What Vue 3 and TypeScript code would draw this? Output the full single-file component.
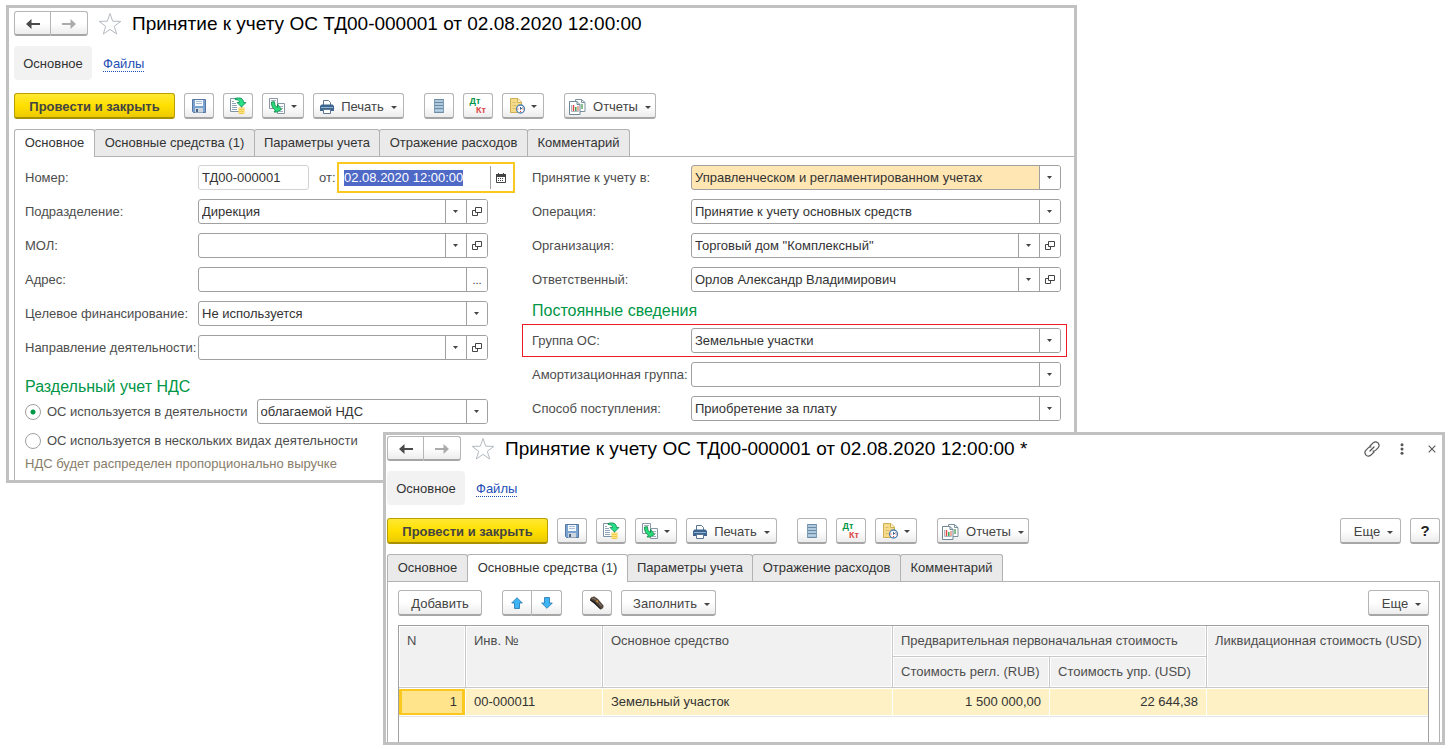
<script setup lang="ts">
import { onMounted, ref } from 'vue'

type Field = {
  id: string
  label: string
  value: string
  kind: 'select' | 'combo' | 'dots'
  filled?: boolean
}

type Pane = {
  id: string
  title: string
  active: number
  front: boolean
}

const panes: Pane[] = [
  { id: 'main', title: 'Принятие к учету ОС ТД00-000001 от 02.08.2020 12:00:00', active: 0, front: false },
  { id: 'assets', title: 'Принятие к учету ОС ТД00-000001 от 02.08.2020 12:00:00 *', active: 1, front: true },
]

const tabs = ['Основное', 'Основные средства (1)', 'Параметры учета', 'Отражение расходов', 'Комментарий']

const leftFields: Field[] = [
  { id: 'department', label: 'Подразделение:', value: 'Дирекция', kind: 'combo' },
  { id: 'mol', label: 'МОЛ:', value: '', kind: 'combo' },
  { id: 'address', label: 'Адрес:', value: '', kind: 'dots' },
  { id: 'funding', label: 'Целевое финансирование:', value: 'Не используется', kind: 'select' },
  { id: 'direction', label: 'Направление деятельности:', value: '', kind: 'combo' },
]

const rightFields: Field[] = [
  { id: 'accounting', label: 'Принятие к учету в:', value: 'Управленческом и регламентированном учетах', kind: 'select', filled: true },
  { id: 'operation', label: 'Операция:', value: 'Принятие к учету основных средств', kind: 'select' },
  { id: 'company', label: 'Организация:', value: 'Торговый дом "Комплексный"', kind: 'combo' },
  { id: 'responsible', label: 'Ответственный:', value: 'Орлов Александр Владимирович', kind: 'combo' },
]

const constantFields: Field[] = [
  { id: 'group', label: 'Группа ОС:', value: 'Земельные участки', kind: 'select' },
  { id: 'depreciation', label: 'Амортизационная группа:', value: '', kind: 'select' },
  { id: 'receipt', label: 'Способ поступления:', value: 'Приобретение за плату', kind: 'select' },
]

const columns = [
  { title: 'Основные', fields: leftFields },
  { title: 'Учет', fields: rightFields },
]

const number = ref('ТД00-000001')
const date = ref('02.08.2020 12:00:00')
const usage = ref('single')
const dateInput = ref<HTMLInputElement[] | null>(null)

onMounted(() => {
  const input = dateInput.value?.[0]
  input?.focus()
  input?.select()
})
</script>

<template>
  <main class="desktop">
    <section v-for="pane in panes" :key="pane.id" class="window" :class="pane.front ? 'front' : 'back'">
      <header class="title-row">
        <div class="split">
          <button type="button" aria-label="Назад">
            <svg width="16" height="12" viewBox="0 0 16 12"><path d="M1 6 6.500 1v4H15v2H6.500v4z" fill="#4a4a4a" /></svg>
          </button>
          <button type="button" aria-label="Вперед">
            <svg width="16" height="12" viewBox="0 0 16 12"><path d="M15 6 9.500 1v4H1v2h8.500v4z" fill="#ababab" /></svg>
          </button>
        </div>
        <button type="button" class="bare star" aria-label="Избранное">
          <svg width="24" height="24" viewBox="0 0 24 24"><path d="M12 1.500 14.700 9.200 22.800 9.400 16.300 14.300 18.700 22 12 17.400 5.300 22 7.700 14.300 1.200 9.400 9.300 9.200z" fill="#fff" stroke="#b4bac1" /></svg>
        </button>
        <h1>{{ pane.title }}</h1>
        <div v-if="pane.front" class="window-tools">
          <button type="button" class="bare" aria-label="Ссылка">
            <svg width="16" height="16" viewBox="0 0 16 16" fill="none" stroke="#555" stroke-width="1.200" stroke-linecap="round"><path d="M6 5 9.300 1.700Q11.500-.2 14 1.900 16.100 4.500 14.200 6.700L11.500 9.400Q10.500 10.300 9 10M10 11 6.700 14.300Q4.500 16.200 2 14.100-.1 11.500 1.800 9.300L4.500 6.600Q5.500 5.700 7 6M6 10 10 6" /></svg>
          </button>
          <button type="button" class="bare" aria-label="Меню">
            <svg width="4" height="12" viewBox="0 0 4 12" fill="#555"><circle cx="2" cy="1.700" r="1.500" /><circle cx="2" cy="6" r="1.500" /><circle cx="2" cy="10.300" r="1.500" /></svg>
          </button>
          <button type="button" class="bare close" aria-label="Закрыть">
            <svg width="8" height="8" viewBox="0 0 8 8" stroke="#555" stroke-width="1.100"><path d="M.7.7l6.600 6.600M7.300.7.7 7.300" /></svg>
          </button>
        </div>
      </header>

      <nav class="sections">
        <a href="#" class="current">Основное</a>
        <a href="#" class="link">Файлы</a>
      </nav>

      <div class="toolbar">
        <button type="button" class="btn primary">Провести и закрыть</button>
        <button type="button" class="btn icon" aria-label="Записать">
          <svg width="14" height="14" viewBox="0 0 14 14"><path d="M.5.5h13v13h-12l-1-1z" fill="#7ba3d2" stroke="#56779f" /><path d="M3 1h8v6H3z" fill="#f6f9fc" /><path d="M4 2.500h6M4 4.500h6" stroke="#a9bdd4" /><path d="M3 9h8v4.500H3z" fill="#cdd5dd" /><path d="M4 10h2v3H4z" fill="#466588" /></svg>
        </button>
        <button type="button" class="btn icon" aria-label="Провести">
          <svg width="18" height="18" viewBox="0 0 18 18"><path d="M1.500 1.500h11v13h-11z" fill="#fff" stroke="#7d92a5" /><path d="M3 4.500h2M3 6.500h4M3 8.500h5M3 10.500h5M3 12.500h5" stroke="#91a4b5" /><path d="M9.500 10.500h6v6q-3 1.500-6 0z" fill="#f3c944" /><path d="M9.500 11q3 1.500 6 0M9.500 13q3 1.500 6 0M9.500 15q3 1.500 6 0" fill="none" stroke="#fff0a6" stroke-width=".8" /><path d="M6 1.500c5-1.500 8.500 0 8.500 4H17l-4.500 4.500L8 5.500h2.500C10.500 3.500 9 2.500 6 2.500z" fill="#27e086" stroke="#15935a" stroke-width=".9" /></svg>
        </button>
        <button type="button" class="btn icon menu" aria-label="Создать на основании">
          <svg width="18" height="18" viewBox="0 0 18 18"><path d="M1.500 1.500h8v10h-8z" fill="#fff" stroke="#8797a6" /><path d="M3 3.500h5M3 5.500h3M3 7.500h3" stroke="#a1b0be" /><path d="M9.500 6.500h7v10h-7z" fill="#fff" stroke="#8797a6" /><path d="M12 9.500h3M13 11.500h2M11 14.500h4" stroke="#a1b0be" /><path d="M3.500 5 6.500 4.700 7 8.500 9.500 10.500V7l4 5.500-4.500 2.500H6L7.500 13Q3.300 11 3.500 5z" fill="#27dd7b" stroke="#15894d" stroke-width=".9" /></svg>
          <svg class="caret" width="6" height="3" viewBox="0 0 6 3"><path d="M0 0h6L3 3z" /></svg>
        </button>
        <button type="button" class="btn menu print">
          <svg width="14" height="14" viewBox="0 0 14 14"><path d="M3.500 5V.5H8.500L10.500 2.500V5" fill="#fff" stroke="#5c7590" /><path d="M1.500 4.500h11l1.500 1.500v5H0V6z" fill="#3d668f" /><path d="M1 7.500h12" stroke="#8fb2d4" /><path d="M3.500 9.500h7v4h-7z" fill="#fff" stroke="#5c7590" /></svg>
          <span>Печать</span>
          <svg class="caret" width="6" height="3" viewBox="0 0 6 3"><path d="M0 0h6L3 3z" /></svg>
        </button>
        <button type="button" class="btn icon group" aria-label="Список">
          <svg width="10" height="14" viewBox="0 0 10 14"><path d="M0 0h10v14H0z" fill="#a5c1d8" /><path d="M0 .5h10M0 3.500h10M0 6.500h10M0 9.500h10M0 13.500h10" stroke="#6c8ba5" /><path d="M1 2h8M1 5h8M1 8h8M1 11.500h8" stroke="#b8d0e3" /><path d="M.5 0v14M9.500 0v14" stroke="#7e9bb3" /></svg>
        </button>
        <button type="button" class="btn icon dtkt" aria-label="Дебет и кредит"><span>Дт</span><span>Кт</span></button>
        <button type="button" class="btn icon menu" aria-label="Календарь">
          <svg width="18" height="18" viewBox="0 0 18 18"><path d="M2.500 1.500H10L13.500 5v10.500h-11z" fill="#f5db8a" stroke="#cfae55" /><path d="M9.500 1.500V5.500h4" fill="#fff4c8" stroke="#cfae55" /><path d="M4.500 5.500h3M4.500 8.500h4M4.500 11.500h3" stroke="#d9bd6c" /><circle cx="12.500" cy="12" r="4" fill="#fff" stroke="#4d7eb0" stroke-width="1.300" /><path d="M12.500 12.500V10M12.500 12.500l2-2" stroke="#3d6591" /><path d="M9.500 12h1M14.500 12h1M12.500 14v1" stroke="#e33" /></svg>
          <svg class="caret" width="6" height="3" viewBox="0 0 6 3"><path d="M0 0h6L3 3z" /></svg>
        </button>
        <button type="button" class="btn menu group reports">
          <svg width="17" height="16" viewBox="0 0 17 16"><path d="M6.500.5h6l3.500 3v9H6.500z" fill="#fff" stroke="#7c919f" /><path d="M12.500.5v3H16" fill="none" stroke="#7c919f" /><path d="M13 5v5" stroke="#61aa66" stroke-width="1.500" /><path d="M.5 2.500H8l3 3v10H.5z" fill="#fff" stroke="#6f8797" /><path d="M8 2.500v3h3" fill="none" stroke="#6f8797" /><path d="M2.500 6v6.500h7" fill="none" stroke="#a9b6c1" /><path d="M4.500 6v6" stroke="#e34545" stroke-width="1.500" /><path d="M6.800 8v4" stroke="#35aa54" stroke-width="1.500" /><path d="M9 7v5" stroke="#dd5a41" /></svg>
          <span>Отчеты</span>
          <svg class="caret" width="6" height="3" viewBox="0 0 6 3"><path d="M0 0h6L3 3z" /></svg>
        </button>
        <template v-if="pane.front">
          <button type="button" class="btn menu more">
            <span>Еще</span>
            <svg class="caret" width="6" height="3" viewBox="0 0 6 3"><path d="M0 0h6L3 3z" /></svg>
          </button>
          <button type="button" class="btn icon help" aria-label="Справка">?</button>
        </template>
      </div>

      <div class="tabs" role="tablist">
        <button v-for="(tab, i) in tabs" :key="tab" type="button" role="tab" :aria-selected="i === pane.active" :class="{ active: i === pane.active }">{{ tab }}</button>
      </div>

      <form v-if="!pane.front" class="panel form" @submit.prevent>
        <div v-for="(column, c) in columns" :key="column.title" class="column" :class="c === 0 ? 'left' : 'right'">
          <div v-if="c === 0" class="row">
            <label for="number">Номер:</label>
            <div class="pair">
              <div class="field number"><input id="number" v-model="number" type="text" /></div>
              <label for="date">от:</label>
              <div class="field date">
                <input id="date" ref="dateInput" v-model="date" type="text" />
                <button type="button" class="cell" aria-label="Выбрать дату">
                  <svg width="10" height="10" viewBox="0 0 10 10"><path d="M.5 1.500h9v8h-9z" fill="#fff" stroke="#444" /><path d="M0 1h10v3H0zM2 0h1v1H2zM7 0h1v1H7z" fill="#444" /><path d="M2 5.500h6M2 7.500h6" stroke="#444" stroke-dasharray="1 1" /></svg>
                </button>
              </div>
            </div>
          </div>

          <div v-for="field in column.fields" :key="field.id" class="row">
            <label :for="field.id">{{ field.label }}</label>
            <div class="field" :class="{ filled: field.filled }">
              <template v-if="field.kind === 'dots'">
                <input :id="field.id" type="text" :value="field.value" />
                <button type="button" class="cell dots" aria-label="Выбрать">...</button>
              </template>
              <template v-else>
                <select :id="field.id"><option>{{ field.value }}</option></select>
                <span class="cell arrow"><svg width="5" height="3" viewBox="0 0 5 3"><path d="M0 0h5L2.500 3z" /></svg></span>
              </template>
              <button v-if="field.kind === 'combo'" type="button" class="cell" aria-label="Открыть">
                <svg width="10" height="10" viewBox="0 0 10 10" fill="none" stroke="#444"><path d="M3.500.5h6v5h-6zM3 3.500H.5v5h5V6" /></svg>
              </button>
            </div>
          </div>

          <fieldset v-if="c === 0">
            <h2>Раздельный учет НДС</h2>
            <div class="radio-row">
              <label><input v-model="usage" type="radio" name="usage" value="single" />ОС используется в деятельности</label>
              <div class="field">
                <select aria-label="Вид деятельности"><option>облагаемой НДС</option></select>
                <span class="cell arrow"><svg width="5" height="3" viewBox="0 0 5 3"><path d="M0 0h5L2.500 3z" /></svg></span>
              </div>
            </div>
            <label class="second"><input v-model="usage" type="radio" name="usage" value="several" />ОС используется в нескольких видах деятельности</label>
            <p>НДС будет распределен пропорционально выручке</p>
          </fieldset>

          <template v-else>
            <h2>Постоянные сведения</h2>
            <div v-for="field in constantFields" :key="field.id" class="row" :class="{ marked: field.id === 'group' }">
              <label :for="field.id">{{ field.label }}</label>
              <div class="field">
                <select :id="field.id"><option>{{ field.value }}</option></select>
                <span class="cell arrow"><svg width="5" height="3" viewBox="0 0 5 3"><path d="M0 0h5L2.500 3z" /></svg></span>
              </div>
            </div>
          </template>
        </div>
      </form>

      <div v-else class="panel list">
        <div class="toolbar">
          <button type="button" class="btn add">Добавить</button>
          <div class="split group">
            <button type="button" aria-label="Вверх">
              <svg width="12" height="12" viewBox="0 0 12 12"><path d="M6 .7 11.300 6H8.500v5.500h-5V6H.7z" fill="#3fb4f5" stroke="#2273ac" stroke-width=".8" /></svg>
            </button>
            <button type="button" aria-label="Вниз">
              <svg width="12" height="12" viewBox="0 0 12 12"><path d="M6 11.300.7 6h2.800V.5h5V6h2.800z" fill="#3fb4f5" stroke="#2273ac" stroke-width=".8" /></svg>
            </button>
          </div>
          <button type="button" class="btn icon group" aria-label="Сканер">
            <svg width="16" height="16" viewBox="0 0 16 16"><path d="M1 4.500Q1.500 1.500 5.500 1.500L9 4l5.500 6.500q.5 3-3 4L5.500 8z" fill="#55483f" /><path d="M1 4 5.500 6.500l6 6.500v1.500L5 8.500 1 5.500z" fill="#211d1b" /><path d="M3 3 7 4.500M9.500 7.500l3 3.500" stroke="#8a796c" /><path d="M7.500 5.500 8.800 7" stroke="#f0a02c" stroke-width="1.300" /></svg>
          </button>
          <button type="button" class="btn menu fill">
            <span>Заполнить</span>
            <svg class="caret" width="6" height="3" viewBox="0 0 6 3"><path d="M0 0h6L3 3z" /></svg>
          </button>
          <button type="button" class="btn menu more">
            <span>Еще</span>
            <svg class="caret" width="6" height="3" viewBox="0 0 6 3"><path d="M0 0h6L3 3z" /></svg>
          </button>
        </div>
        <div class="table-box">
          <table>
            <colgroup><col class="c-n" /><col class="c-inv" /><col class="c-name" /><col class="c-cost" /><col class="c-cost" /><col /></colgroup>
            <thead>
              <tr>
                <th rowspan="2">N</th>
                <th rowspan="2">Инв. №</th>
                <th rowspan="2">Основное средство</th>
                <th colspan="2">Предварительная первоначальная стоимость</th>
                <th rowspan="2">Ликвидационная стоимость (USD)</th>
              </tr>
              <tr>
                <th>Стоимость регл. (RUB)</th>
                <th>Стоимость упр. (USD)</th>
              </tr>
            </thead>
            <tbody>
              <tr>
                <td class="num picked">1</td>
                <td>00-000011</td>
                <td>Земельный участок</td>
                <td class="num">1 500 000,00</td>
                <td class="num">22 644,38</td>
                <td></td>
              </tr>
            </tbody>
          </table>
        </div>
      </div>
    </section>
  </main>
</template>

<style>
body {
  background: #fff;
}
</style>

<style scoped>
* {
  box-sizing: border-box;
}

.desktop {
  position: relative;
  min-height: 100vh;
  overflow: hidden;
  font: 13px/16px "Liberation Sans", Arial, sans-serif;
  color: #4d4d4d;
}

button,
input,
select {
  font: inherit;
  color: inherit;
  margin: 0;
}

button svg {
  display: block;
  flex: none;
}

.window {
  position: absolute;
  background: #fff;
  border: 3px solid #c1c1c1;
  overflow: hidden;
}

.back {
  top: 5px;
  left: 6px;
  right: 374px;
  padding: 3px 0 0 5px;
}

.front {
  top: 432px;
  left: 383px;
  right: 6px;
  padding: 1px 2px 0 1px;
}

.title-row {
  display: flex;
  align-items: center;
  height: 25px;
}

.split {
  display: flex;
}

.split button {
  display: flex;
  align-items: center;
  justify-content: center;
  width: 37px;
  height: 25px;
  padding: 1px 0 0;
  border: 1px solid #b5b5b5;
  border-bottom: 2px solid #a6a6a6;
  background: linear-gradient(#fff 50%, #ededed);
}

.split button:first-child {
  border-radius: 3px 0 0 3px;
}

.split button:last-child {
  border-left: 0;
  border-radius: 0 3px 3px 0;
}

.bare {
  padding: 0;
  border: 0;
  background: none;
}

.star {
  margin: 0 10px;
}

h1 {
  margin: 0;
  font-size: 19px;
  line-height: 24px;
  font-weight: 400;
  color: #000;
  white-space: nowrap;
}

.window-tools {
  display: flex;
  align-items: center;
  gap: 20px;
  margin-left: auto;
  padding-right: 4px;
}

.close {
  margin-left: 4px;
}

.sections {
  display: flex;
  align-items: center;
  gap: 11px;
  margin: 10px 0 13px;
}

.current {
  width: 78px;
  padding: 10px 0 8px;
  border-radius: 4px;
  background: #f2f2f2;
  color: #333;
  text-align: center;
  text-decoration: none;
}

.link {
  margin-top: 2px;
  color: #1d4fb4;
  line-height: 14px;
  text-decoration: none;
  border-bottom: 1px dotted #1d4fb4;
}

.toolbar {
  display: flex;
  gap: 9px;
}

.btn {
  display: flex;
  align-items: center;
  justify-content: center;
  height: 26px;
  padding: 2px 6px 0;
  border: 1px solid #b5b5b5;
  border-bottom: 2px solid #a6a6a6;
  border-radius: 3px;
  background: linear-gradient(#fff 50%, #ececec);
  color: #444;
  white-space: nowrap;
}

.primary {
  width: 161px;
  border-color: #b9a000;
  border-bottom-color: #a89100;
  background: linear-gradient(#ffe835, #ffe000 50%, #ecca00);
  font-weight: 700;
}

.icon {
  width: 30px;
  padding: 1px 0 0;
}

.menu {
  gap: 7px;
}

.icon.menu {
  width: 42px;
  gap: 5px;
  padding-right: 2px;
}

.print {
  width: 91px;
}

.reports {
  width: 92px;
}

.toolbar .group {
  margin-left: 11px;
}

.caret {
  margin-top: 1px;
  fill: #444;
}

.dtkt {
  flex-direction: column;
  font-size: 9px;
  line-height: 9px;
  font-weight: 700;
}

.dtkt span:first-child {
  margin-right: 6px;
  color: #009646;
}

.dtkt span:last-child {
  margin-left: 6px;
  color: #dc4646;
}

.more {
  width: 61px;
  margin-left: auto;
  padding-left: 12px;
}

.help {
  font-size: 15px;
  font-weight: 700;
  color: #222;
}

.tabs {
  display: flex;
  margin-top: 10px;
}

.tabs button {
  width: 81px;
  height: 27px;
  margin-right: -1px;
  padding: 0;
  border: 1px solid #b2b2b2;
  border-bottom: 0;
  border-radius: 3px 3px 0 0;
  background: #eaeaea;
  color: #333;
  text-align: center;
  white-space: nowrap;
}

.tabs button:nth-child(2) {
  width: 161px;
}

.tabs button:nth-child(3) {
  width: 126px;
}

.tabs button:nth-child(4) {
  width: 149px;
}

.tabs button:nth-child(5) {
  width: 103px;
}

.tabs .active {
  position: relative;
  height: 28px;
  margin-bottom: -1px;
  padding-bottom: 1px;
  background: #fff;
}

.panel {
  border-top: 1px solid #b2b2b2;
  border-left: 1px solid #b2b2b2;
}

.form {
  display: grid;
  grid-template-columns: 463fr 529fr;
  gap: 44px;
  padding: 8px 13px 8px 10px;
}

.column {
  display: flex;
  flex-direction: column;
  gap: 9px;
  min-width: 0;
}

.row {
  display: flex;
  align-items: center;
}

.row > label {
  flex: none;
  white-space: nowrap;
}

.left .row > label {
  width: 173px;
}

.right .row > label {
  width: 159px;
}

.marked {
  margin: -4px -6px -4px -10px;
  padding: 3px 5px 3px 9px;
  border: 1px solid #ed1c24;
}

.field {
  display: flex;
  flex: 1;
  min-width: 0;
  height: 25px;
  border: 1px solid #a0a0a0;
  border-radius: 3px;
  background: #fff;
  color: #333;
  overflow: hidden;
}

.field input,
.field select {
  flex: 1;
  min-width: 0;
  width: 100%;
  padding: 0 3px;
  border: 0;
  outline: 0;
  background: none;
  appearance: none;
}

.field select {
  padding-right: 24px;
}

.cell {
  display: flex;
  flex: none;
  align-items: center;
  justify-content: center;
  width: 21px;
  padding: 0;
  border: 0;
  border-left: 1px solid #a0a0a0;
  background: #fff;
}

.dots {
  font-size: 11px;
}

.arrow {
  margin-left: -21px;
  padding-right: 1px;
  pointer-events: none;
  fill: #444;
}

.filled {
  background: #ffe6b3;
}

.pair {
  display: flex;
  flex: 1;
  align-items: center;
  min-width: 0;
}

.pair label {
  width: 28px;
  padding-left: 10px;
}

.number {
  flex: none;
  width: 111px;
  border-color: #d2d2d2;
}

.date {
  height: 31px;
  margin: -3px -27px -3px 0;
  padding: 2px 0;
  border: 2px solid #fac81e;
  border-radius: 0;
}

.date input {
  padding-left: 5px;
}

.date input::selection {
  background: #4f69c6;
  color: #fff;
}

.date .cell {
  width: 23px;
  padding-right: 2px;
}

h2 {
  margin: 0;
  padding-top: 2px;
  font-size: 16px;
  line-height: 16px;
  font-weight: 400;
  color: #009646;
}

fieldset {
  min-width: 0;
  margin: 8px 0 0;
  padding: 0;
  border: 0;
}

.radio-row {
  display: flex;
  align-items: center;
  gap: 9px;
  margin: 4px 0 9px;
}

fieldset label {
  display: flex;
  align-items: center;
  white-space: nowrap;
}

input[type='radio'] {
  flex: none;
  width: 16px;
  height: 16px;
  margin: 0 6px 0 0;
  border: 1px solid #a0a0a0;
  border-radius: 50%;
  background: #fff;
  appearance: none;
}

input[type='radio']:checked {
  background: radial-gradient(circle, #009646 2px, #fff 3px);
}

fieldset p {
  margin: 7px 0 0;
  color: #877d69;
}

.list {
  padding: 8px 10px 0;
  border-right: 1px solid #b2b2b2;
}

.add {
  width: 84px;
}

.list .split button {
  width: 30px;
  height: 26px;
}

.fill {
  width: 95px;
  padding-left: 12px;
}

.table-box {
  margin-top: 9px;
  padding-bottom: 25px;
  border: 1px solid #a0a0a0;
  border-bottom: 0;
}

table {
  width: 100%;
  table-layout: fixed;
  border-collapse: separate;
  border-spacing: 0;
}

.c-n {
  width: 67px;
}

.c-inv {
  width: 137px;
}

.c-name {
  width: 290px;
}

.c-cost {
  width: 157px;
}

th {
  height: 31px;
  padding: 7px 8px 0;
  border-right: 1px solid #c8c8c8;
  border-bottom: 1px solid #c8c8c8;
  background: #f1f1f1;
  box-shadow: inset 0 0 0 1px #fff;
  font-weight: 400;
  text-align: left;
  vertical-align: top;
  white-space: nowrap;
}

td {
  height: 29px;
  padding: 0 8px;
  border-right: 1px solid #fff;
  border-bottom: 1px solid #e4e4e4;
  background: #fdf1c5;
  box-shadow: inset 0 1px 0 #fff, inset 0 -1px 0 #fff;
  color: #333;
}

th:last-child[rowspan],
td:last-child {
  border-right: 0;
}

.num {
  text-align: right;
}

.picked {
  background: #ffe48c;
  box-shadow: inset 0 1px 0 #fff, inset 0 -1px 0 #fff, inset 0 0 0 3px #fac81e;
}
</style>
